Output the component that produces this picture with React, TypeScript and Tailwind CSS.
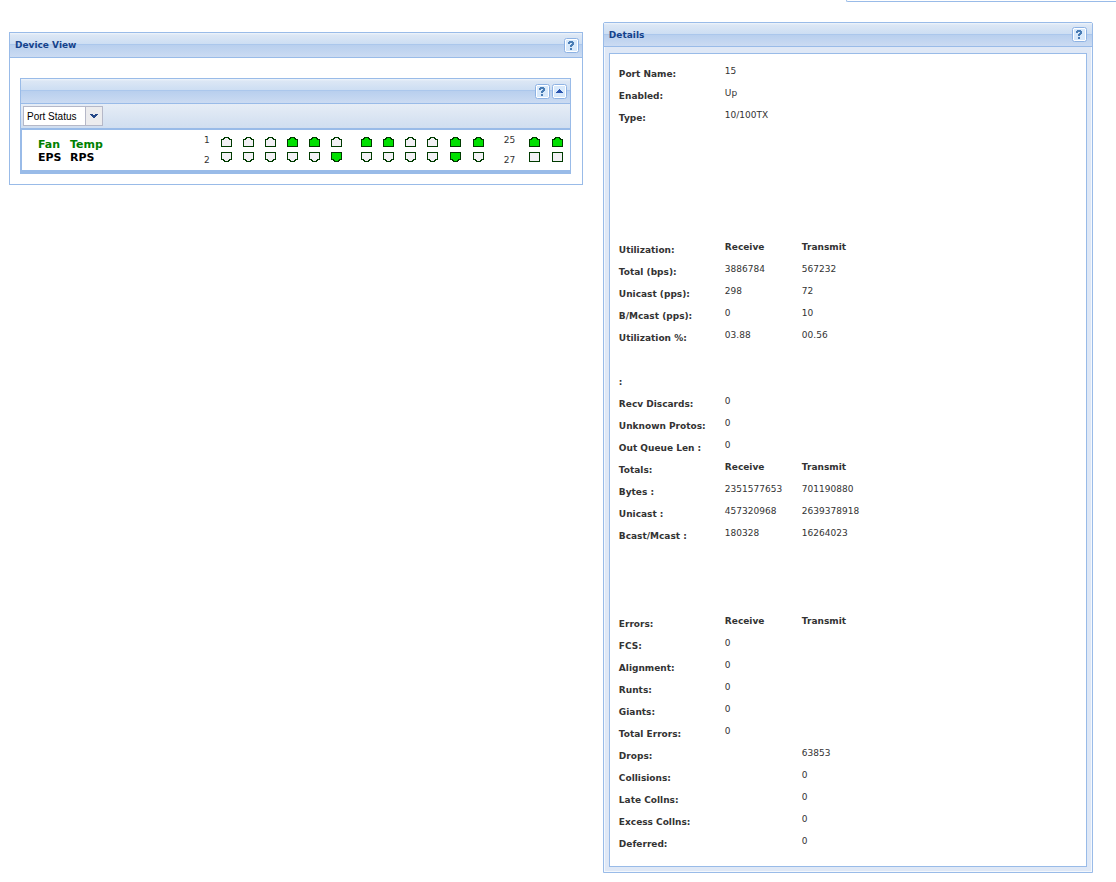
import { useState } from "react";

const portGroups = [
  { top: [0, 0, 0, 1, 1, 0], bottom: [0, 0, 0, 0, 0, 1], gap: "gap-[11px]", space: "ml-[11px]" },
  { top: [1, 1, 0, 0], bottom: [0, 0, 0, 0], gap: "gap-[11px]", space: "ml-[19px]" },
  { top: [1, 1], bottom: [1, 0], gap: "gap-3", space: "ml-3" },
];

type Row = { label?: string; rx?: string; tx?: string; head?: boolean };

const rows: Row[] = [
  { label: "Port Name:", rx: "15" },
  { label: "Enabled:", rx: "Up" },
  { label: "Type:", rx: "10/100TX" },
  {},
  {},
  {},
  {},
  {},
  { label: "Utilization:", rx: "Receive", tx: "Transmit", head: true },
  { label: "Total (bps):", rx: "3886784", tx: "567232" },
  { label: "Unicast (pps):", rx: "298", tx: "72" },
  { label: "B/Mcast (pps):", rx: "0", tx: "10" },
  { label: "Utilization %:", rx: "03.88", tx: "00.56" },
  {},
  { label: ":" },
  { label: "Recv Discards:", rx: "0" },
  { label: "Unknown Protos:", rx: "0" },
  { label: "Out Queue Len :", rx: "0" },
  { label: "Totals:", rx: "Receive", tx: "Transmit", head: true },
  { label: "Bytes :", rx: "2351577653", tx: "701190880" },
  { label: "Unicast :", rx: "457320968", tx: "2639378918" },
  { label: "Bcast/Mcast :", rx: "180328", tx: "16264023" },
  {},
  {},
  {},
  { label: "Errors:", rx: "Receive", tx: "Transmit", head: true },
  { label: "FCS:", rx: "0" },
  { label: "Alignment:", rx: "0" },
  { label: "Runts:", rx: "0" },
  { label: "Giants:", rx: "0" },
  { label: "Total Errors:", rx: "0" },
  { label: "Drops:", tx: "63853" },
  { label: "Collisions:", tx: "0" },
  { label: "Late Collns:", tx: "0" },
  { label: "Excess Collns:", tx: "0" },
  { label: "Deferred:", tx: "0" },
];

const headerBg =
  "bg-[linear-gradient(to_bottom,#f0f5fb_0,#dce7f5_2px,#cddef3_11px,#abc7ec_11px,#abc7ec_12px,#b8cfee_12px,#cbdbf2_100%)]";

function HelpIcon() {
  return (
    <svg width="15" height="15" viewBox="0 0 15 15" aria-hidden="true">
      <rect x="0.5" y="0.5" width="14" height="14" rx="2" fill="#fff" stroke="#8db2e3" />
      <rect x="2" y="2" width="11" height="11" fill="#d8e9fb" />
      <path d="M5 3H9V4H10V7H9V8H8V9H6V7H7V6H8V5H6V6H4V4H5Z" fill="#4a7db5" />
      <rect x="6" y="10" width="2" height="2" fill="#4a7db5" />
    </svg>
  );
}

function CollapseIcon() {
  return (
    <svg width="15" height="15" viewBox="0 0 15 15" aria-hidden="true">
      <rect x="0.5" y="0.5" width="14" height="14" rx="2" fill="#fff" stroke="#8db2e3" />
      <rect x="2" y="2" width="11" height="11" fill="#d8e9fb" />
      <path d="M7 5H8V6H9V7H10V8H11V9H4V8H5V7H6V6H7Z" fill="#2a54ae" />
    </svg>
  );
}

function Port({ on, kind }: { on: number; kind: "up" | "down" | "square" }) {
  const shapes = {
    up: "M0.5 9.5V2.5H2.5V1.5H3.5V0.5H7.5V1.5H8.5V2.5H10.5V9.5Z",
    down: "M0.5 0.5V7.5H2.5V8.5H3.5V9.5H7.5V8.5H8.5V7.5H10.5V0.5Z",
    square: "M0.5 0.5H10.5V9.5H0.5Z",
  };
  return (
    <svg width="11" height="10" viewBox="0 0 11 10" className="block" shapeRendering="crispEdges" aria-hidden="true">
      <path d={shapes[kind]} fill={on ? "#00e000" : "#f3f1f5"} stroke="#003a00" />
    </svg>
  );
}

function PortNumbers({ top, bottom, className }: { top: string; bottom: string; className: string }) {
  return (
    <div className={`flex flex-col gap-2 text-[9px] leading-3 text-[#333] ${className}`}>
      <span>{top}</span>
      <span>{bottom}</span>
    </div>
  );
}

function DeviceView() {
  const [view, setView] = useState("Port Status");
  const [open, setOpen] = useState(true);

  return (
    <section className="mt-8 min-w-0 flex-[574] border border-[#99bbe8] bg-white">
      <header className={`flex h-[25px] items-center justify-between border-b border-[#99bbe8] pr-[3px] pl-[5px] ${headerBg}`}>
        <h2 className="text-[9px] leading-4 font-bold text-[#15428b]">Device View</h2>
        <button type="button" aria-label="Help">
          <HelpIcon />
        </button>
      </header>

      <div className="pt-5 pr-[11px] pb-[10px] pl-[10px]">
        <div className="border border-b-4 border-[#99bbe8]">
          <header className={`flex h-[25px] items-center justify-end gap-[2px] border-b border-[#99bbe8] pr-[3px] ${headerBg}`}>
            <button type="button" aria-label="Help">
              <HelpIcon />
            </button>
            <button type="button" aria-label="Collapse" onClick={() => setOpen(!open)}>
              <CollapseIcon />
            </button>
          </header>

          <div className="flex h-[26px] border-b-2 border-[#99bbe8] bg-[linear-gradient(to_bottom,#e6edf6,#d0def0)] pt-[2px] pl-[2px]">
            <div className="relative h-5 w-20">
              <select
                aria-label="View"
                value={view}
                onChange={(e) => setView(e.target.value)}
                className="block h-5 w-20 appearance-none border border-[#b5b8c8] bg-white pt-[2px] pl-[3px] font-['Liberation_Sans',Arial,sans-serif] text-[10px] leading-4 text-black"
              >
                <option>Port Status</option>
                <option>Port Speed</option>
              </select>
              <svg width="18" height="20" viewBox="0 0 18 20" className="pointer-events-none absolute top-0 right-0" aria-hidden="true">
                <rect x="0.5" y="0.5" width="17" height="19" fill="#ececee" stroke="#b5b8c8" />
                <path d="M5 8H8V9H10V8H13V9H12V10H11V11H10V12H8V11H7V10H6V9H5Z" fill="#264888" />
              </svg>
            </div>
          </div>

          {open && (
            <div className="flex h-10 justify-between border-l border-[#99bbe8] pr-[7px] pl-4">
              <div className="grid grid-cols-[32px_auto] content-start pt-2 text-[11px] leading-[13px] font-bold text-black">
                <span className="text-[#008000]">Fan</span>
                <span className="text-[#008000]">Temp</span>
                <span>EPS</span>
                <span>RPS</span>
              </div>

              <div className="flex items-start">
                <PortNumbers top="1" bottom="2" className="pt-1" />
                {portGroups.map((group, i) => (
                  <div key={i} className={`flex flex-col gap-[5px] pt-[7px] ${group.space}`}>
                    <div className={`flex ${group.gap}`}>
                      {group.top.map((on, n) => (
                        <Port key={n} on={on} kind="up" />
                      ))}
                    </div>
                    <div className={`flex ${group.gap}`}>
                      {group.bottom.map((on, n) => (
                        <Port key={n} on={on} kind="down" />
                      ))}
                    </div>
                  </div>
                ))}
                <PortNumbers top="25" bottom="27" className="ml-5 w-3 pt-1" />
                <div className="ml-[13px] flex flex-col gap-[5px] pt-[7px]">
                  <div className="flex gap-3">
                    <Port on={1} kind="up" />
                    <Port on={1} kind="up" />
                  </div>
                  <div className="flex gap-3">
                    <Port on={0} kind="square" />
                    <Port on={0} kind="square" />
                  </div>
                </div>
              </div>
            </div>
          )}
        </div>
      </div>
    </section>
  );
}

function Details() {
  return (
    <section className="mt-[22px] min-w-0 flex-[490] rounded-t-[2px] border border-[#99bbe8] bg-[#dfe8f6]">
      <header className={`flex h-6 items-center justify-between border-b border-[#99bbe8] pr-[5px] pl-[5px] ${headerBg}`}>
        <h2 className="text-[9px] leading-4 font-bold text-[#15428b]">Details</h2>
        <button type="button" aria-label="Help">
          <HelpIcon />
        </button>
      </header>

      <div className="border border-t-0 border-[#f4f8fd] px-1 pt-[6px] pb-[4px]">
        <div className="border border-[#99bbe8] bg-white pt-2 pr-2 pb-3 pl-[9px]">
          <table className="w-full table-fixed text-left text-[9px] leading-3 text-[#333]">
            <colgroup>
              <col className="w-[106px]" />
              <col className="w-[77px]" />
              <col />
            </colgroup>
            <tbody>
              {rows.map((row, i) => (
                <tr key={i} className="h-[22px] align-top">
                  <th scope="row" className="pt-[6px] font-bold whitespace-nowrap">
                    {row.label}
                  </th>
                  <td className={row.head ? "pt-[3px] font-bold" : "pt-[3px]"}>{row.rx}</td>
                  <td className={row.head ? "pt-[3px] font-bold" : "pt-[3px]"}>{row.tx}</td>
                </tr>
              ))}
            </tbody>
          </table>
        </div>
      </div>
    </section>
  );
}

export default function App() {
  return (
    <main className="relative flex min-h-screen items-start gap-5 bg-white pr-[23px] pl-[9px] font-['DejaVu_Sans',Verdana,sans-serif]">
      <div className="absolute top-0 right-0 left-[846px] h-[2px] rounded-bl-[2px] border-b border-l border-[#99bbe8]" />
      <DeviceView />
      <Details />
    </main>
  );
}
